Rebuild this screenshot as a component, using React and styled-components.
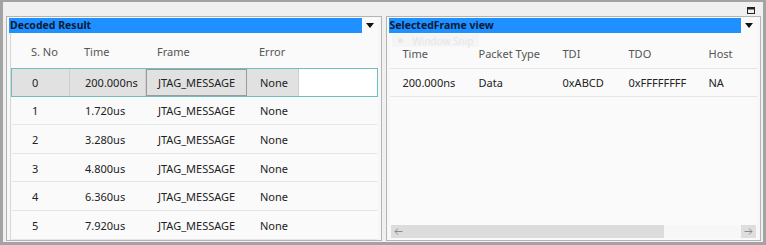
import React from 'react';
import styled, { createGlobalStyle } from 'styled-components';

const GlobalStyle = createGlobalStyle`
  html, body {
    margin: 0;
    padding: 0;
    background: #f0f0f0;
  }
  * {
    box-sizing: border-box;
  }
`;

const decodedCols = [
  { key: 'sno', label: 'S. No', width: 58, pad: 20 },
  { key: 'time', label: 'Time', width: 76, pad: 15 },
  { key: 'frame', label: 'Frame', width: 101, pad: 12 },
  { key: 'error', label: 'Error', width: 52, pad: 13 },
];

const decodedRows = [
  { sno: '0', time: '200.000ns', frame: 'JTAG_MESSAGE', error: 'None' },
  { sno: '1', time: '1.720us', frame: 'JTAG_MESSAGE', error: 'None' },
  { sno: '2', time: '3.280us', frame: 'JTAG_MESSAGE', error: 'None' },
  { sno: '3', time: '4.800us', frame: 'JTAG_MESSAGE', error: 'None' },
  { sno: '4', time: '6.360us', frame: 'JTAG_MESSAGE', error: 'None' },
  { sno: '5', time: '7.920us', frame: 'JTAG_MESSAGE', error: 'None' },
];

const frameCols = [
  { key: 'time', label: 'Time', width: 76, pad: 13 },
  { key: 'type', label: 'Packet Type', width: 84, pad: 13 },
  { key: 'tdi', label: 'TDI', width: 66, pad: 13 },
  { key: 'tdo', label: 'TDO', width: 80, pad: 13 },
  { key: 'host', label: 'Host', width: 60, pad: 13 },
];

const frameRows = [
  { time: '200.000ns', type: 'Data', tdi: '0xABCD', tdo: '0xFFFFFFFF', host: 'NA' },
];

function DropArrow() {
  return (
    <svg width="8" height="5" viewBox="0 0 8 5">
      <path d="M0 0 H8 L4 5 Z" fill="#111" />
    </svg>
  );
}

function MaxIcon() {
  return (
    <svg width="8" height="7" viewBox="0 0 8 7">
      <rect x="0.5" y="0.5" width="7" height="6" fill="none" stroke="#222" />
      <rect x="0.5" y="0.5" width="7" height="2" fill="#222" />
    </svg>
  );
}

function Arrow({ dir }) {
  return (
    <svg width="9" height="7" viewBox="0 0 9 7">
      {dir === 'left' ? (
        <path d="M8.5 3.5 H1 M4 0.5 L1 3.5 L4 6.5" fill="none" stroke="#8a8a8a" strokeWidth="1" />
      ) : (
        <path d="M0.5 3.5 H8 M5 0.5 L8 3.5 L5 6.5" fill="none" stroke="#8a8a8a" strokeWidth="1" />
      )}
    </svg>
  );
}

export default function App() {
  return (
    <>
      <GlobalStyle />
      <Frame>
        <TopStrip>
          <MaxIcon />
        </TopStrip>
        <Panels>
          <Panel>
            <TitleRow>
              <TitleBar>Decoded Result</TitleBar>
              <ArrowBox>
                <DropArrow />
              </ArrowBox>
            </TitleRow>
            <TableArea>
              <HeadRow>
                {decodedCols.map((c) => (
                  <HeadCell key={c.key} w={c.width} pad={c.pad}>
                    {c.label}
                  </HeadCell>
                ))}
              </HeadRow>
              {decodedRows.map((r, i) => (
                <Row key={r.sno} selected={i === 0}>
                  {decodedCols.map((c) => (
                    <Cell key={c.key} w={c.width} pad={c.pad} selected={i === 0}>
                      {r[c.key]}
                    </Cell>
                  ))}
                </Row>
              ))}
            </TableArea>
          </Panel>

          <Panel>
            <TitleRow>
              <TitleBar>SelectedFrame view</TitleBar>
              <ArrowBox>
                <DropArrow />
              </ArrowBox>
            </TitleRow>
            <FrameArea>
              <Ghost>
                <GhostDot />
                Window Snip
              </Ghost>
              <FrameHead>
                {frameCols.map((c) => (
                  <HeadCell key={c.key} w={c.width} pad={c.pad}>
                    {c.label}
                  </HeadCell>
                ))}
              </FrameHead>
              {frameRows.map((r) => (
                <FrameRow key={r.time}>
                  {frameCols.map((c) => (
                    <Cell key={c.key} w={c.width} pad={c.pad}>
                      {r[c.key]}
                    </Cell>
                  ))}
                </FrameRow>
              ))}
              <Spacer />
              <ScrollBar>
                <ScrollBtn>
                  <Arrow dir="left" />
                </ScrollBtn>
                <Thumb />
                <Track />
                <ScrollBtn filled>
                  <Arrow dir="right" />
                </ScrollBtn>
              </ScrollBar>
            </FrameArea>
          </Panel>
        </Panels>
      </Frame>
    </>
  );
}

const Frame = styled.div`
  width: 766px;
  height: 245px;
  border: 2px solid #a3a3a3;
  border-width: 2px 3px 3px 3px;
  background: #f0f0f0;
  display: flex;
  flex-direction: column;
  font-family: 'Noto Sans', 'Open Sans', sans-serif;
  font-size: 11px;
  color: #222;
  overflow: hidden;
`;

const TopStrip = styled.div`
  height: 14px;
  display: flex;
  justify-content: flex-end;
  align-items: center;
  padding: 2px 8px 0 0;
`;

const Panels = styled.div`
  flex: 1;
  display: flex;
  gap: 4px;
  padding: 0 2px 1px 3px;
  min-height: 0;
`;

const Panel = styled.div`
  flex: 1;
  border: 1px solid #b4b4b4;
  background: #f7f7f7;
  display: flex;
  flex-direction: column;
  padding: 1px 3px 0 2px;
  min-width: 0;
  overflow: hidden;
`;

const TitleRow = styled.div`
  display: flex;
  align-items: stretch;
  height: 15px;
  flex-shrink: 0;
`;

const TitleBar = styled.div`
  flex: 1;
  background: #1e90ff;
  color: #0c1a36;
  font-weight: 700;
  font-size: 10.5px;
  line-height: 15px;
  padding-left: 1px;
  white-space: nowrap;
`;

const ArrowBox = styled.div`
  width: 16px;
  display: flex;
  align-items: center;
  justify-content: center;
  background: #fafafa;
`;

const TableArea = styled.div`
  flex: 1;
  margin-left: 1px;
  border-left: 1px solid #d6d6d6;
  background: #fafafa;
  overflow: hidden;
`;

const HeadRow = styled.div`
  display: flex;
  align-items: center;
  height: 35px;
  padding-top: 2px;
  color: #555;
`;

const HeadCell = styled.div`
  width: ${(p) => p.w}px;
  padding-left: ${(p) => p.pad}px;
  flex-shrink: 0;
  white-space: nowrap;
`;

const Row = styled.div`
  display: flex;
  align-items: stretch;
  height: 28.6px;
  border: 1px solid ${(p) => (p.selected ? '#6bbfbd' : 'transparent')};
  border-bottom-color: ${(p) => (p.selected ? '#6bbfbd' : '#e6e6e6')};
  background: ${(p) => (p.selected ? '#fff' : '#fafafa')};
`;

const Cell = styled.div`
  width: ${(p) => p.w}px;
  padding-left: ${(p) => p.pad}px;
  flex-shrink: 0;
  display: flex;
  align-items: center;
  white-space: nowrap;
  color: #222;
  background: ${(p) => (p.selected ? '#e1e1e1' : 'transparent')};
  border-right: 1px solid ${(p) => (p.selected ? '#cfcfcf' : 'transparent')};
  &:nth-child(3) {
    outline: ${(p) => (p.selected ? '1px solid #9a9a9a' : 'none')};
    outline-offset: -1px;
  }
`;

const FrameArea = styled.div`
  position: relative;
  flex: 1;
  display: flex;
  flex-direction: column;
  margin-left: 1px;
  background: #fafafa;
`;

const Ghost = styled.div`
  position: absolute;
  left: 2px;
  top: 1px;
  display: flex;
  align-items: center;
  gap: 10px;
  padding: 0 6px;
  height: 13px;
  background: #f5f5f5;
  color: #e6e6e6;
  font-size: 10px;
`;

const GhostDot = styled.span`
  width: 5px;
  height: 5px;
  border-radius: 50%;
  background: #e8e8e8;
`;

const FrameHead = styled(HeadRow)`
  position: relative;
  height: 36px;
  padding-top: 6px;
  border-bottom: 1px solid #e6e6e6;
`;

const FrameRow = styled.div`
  display: flex;
  align-items: stretch;
  height: 28px;
  border-bottom: 1px solid #e6e6e6;
`;

const Spacer = styled.div`
  flex: 1;
`;

const ScrollBar = styled.div`
  display: flex;
  height: 13px;
  margin: 0 1px 2px 1px;
  background: #f0f0f0;
`;

const ScrollBtn = styled.div`
  width: 15px;
  display: flex;
  align-items: center;
  justify-content: center;
  background: ${(p) => (p.filled ? '#dedede' : '#dcdcdc')};
`;

const Thumb = styled.div`
  width: 258px;
  background: #dcdcdc;
`;

const Track = styled.div`
  flex: 1;
  background: #f7f7f7;
`;
